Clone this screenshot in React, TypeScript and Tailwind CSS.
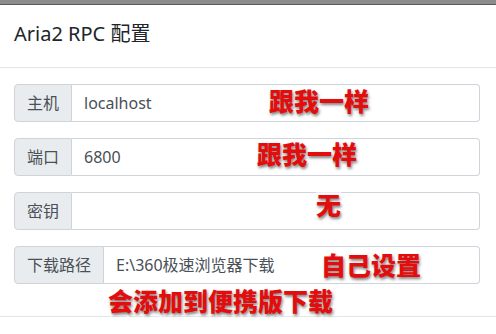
import React from "react";

const rows: { label: string; value: string }[] = [
  { label: "主机", value: "localhost" },
  { label: "端口", value: "6800" },
  { label: "密钥", value: "" },
  { label: "下载路径", value: "E:\\360极速浏览器下载" },
];

const notes: { text: string; cls: string }[] = [
  { text: "跟我一样", cls: "left-[269px] top-[88px]" },
  { text: "跟我一样", cls: "left-[257px] top-[141px]" },
  { text: "无", cls: "left-[316px] top-[192px]" },
  { text: "自己设置", cls: "left-[321px] top-[252px]" },
  { text: "会添加到便携版下载", cls: "left-[108px] top-[288px]" },
];

export default function App() {
  return (
    <div
      className="relative w-[496px] h-[334px] overflow-hidden bg-white"
      style={{ fontFamily: '"Noto Sans", "Noto Sans CJK SC", sans-serif' }}
    >
      <div className="h-[5px] bg-[#8c8c8c] border-b border-[#5a5a5a]" />
      <div className="h-[63px] flex items-center px-[14px] border-b border-[#e6e6e6]">
        <h5 className="text-[20px] leading-none text-[#212529] pb-[4px]">Aria2 RPC 配置</h5>
      </div>
      <div className="pt-[16px] pl-[14px] pr-[16px] flex flex-col gap-[16px] pb-[32px] border-b border-[#e6e6e6]">
        {rows.map((r, i) => (
          <div key={i} className="flex h-[38px] w-[466px]">
            <div className="flex items-center px-[12px] bg-[#e9ecef] border border-[#ced4da] rounded-l-[4px] text-[16px] text-[#495057]">
              {r.label}
            </div>
            <div className="flex-1 flex items-center px-[12px] border border-l-0 border-[#ced4da] rounded-r-[4px] text-[16px] text-[#495057]">
              {r.value}
            </div>
          </div>
        ))}
      </div>
      {notes.map((n, i) => (
        <div
          key={i}
          className={`absolute ${n.cls} text-[25px] leading-none font-black text-[#e30d0d] whitespace-nowrap [-webkit-text-stroke:5px_white] [paint-order:stroke_fill] [text-shadow:1px_2px_3px_rgba(0,0,0,0.5)]`}
          style={{ fontFamily: '"Noto Sans CJK SC", sans-serif' }}
        >
          {n.text}
        </div>
      ))}
    </div>
  );
}
